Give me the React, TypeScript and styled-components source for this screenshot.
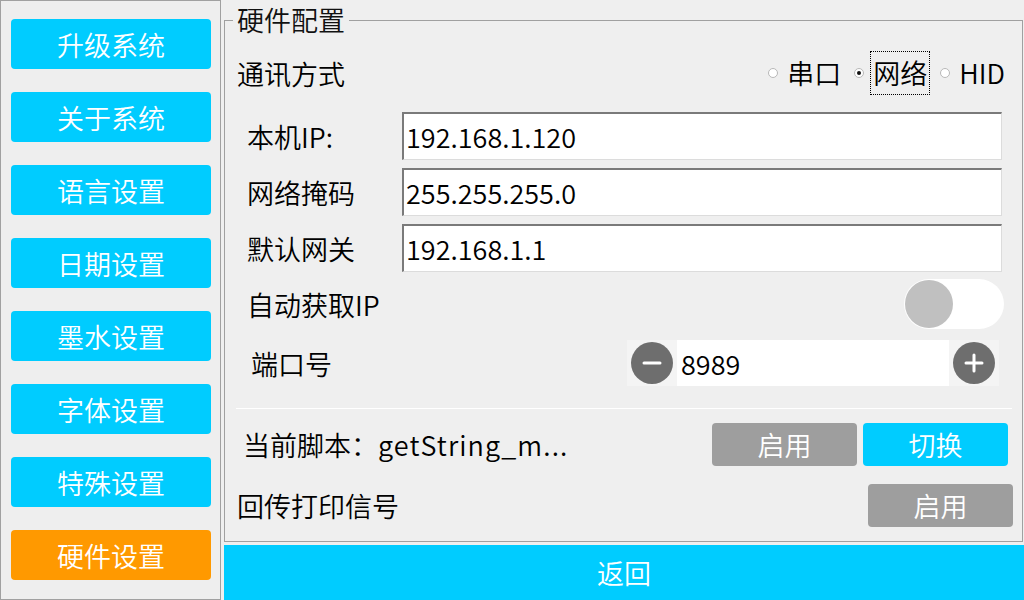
import React, { useState } from "react";
import styled, { createGlobalStyle } from "styled-components";

const GlobalStyle = createGlobalStyle`
  html, body {
    margin: 0;
    padding: 0;
    background: #efefef;
    font-family: "Noto Sans CJK SC", "Noto Sans", sans-serif;
    font-weight: 350;
  }
  * { box-sizing: border-box; }
`;

const Screen = styled.div`
  display: flex;
  width: 1024px;
  height: 600px;
  overflow: hidden;
  background: #efefef;
  color: #000;
`;

const Sidebar = styled.div`
  width: 221px;
  height: 600px;
  border: 1px solid #a0a0a0;
  background: #eeeeee;
  padding: 18px 0 0 10px;
  display: flex;
  flex-direction: column;
  gap: 23px;
`;

const NavButton = styled.div<{ $active?: boolean }>`
  width: 200px;
  height: 50px;
  border-radius: 4px;
  background: ${(p) => (p.$active ? "#ff9900" : "#00ccff")};
  color: #fff;
  font-size: 27px;
  display: flex;
  align-items: center;
  justify-content: center;
`;

const Main = styled.div`
  flex: 1;
  display: flex;
  flex-direction: column;
  padding-left: 3px;
`;

const Group = styled.fieldset`
  margin: 5px 1px 0 0;
  padding: 0 0 13px 0;
  height: 537px;
  border: 1px solid #a0a0a0;
  display: flex;
  flex-direction: column;
  min-width: 0;
`;

const Legend = styled.legend`
  margin-left: 8px;
  padding: 0 4px;
  font-size: 27px;
  line-height: 30px;
  color: #111;
`;

const Row = styled.div<{ $top: number; $h: number; $left: number; $right?: number }>`
  display: flex;
  align-items: center;
  margin-top: ${(p) => p.$top}px;
  height: ${(p) => p.$h}px;
  padding-left: ${(p) => p.$left}px;
  padding-right: ${(p) => p.$right ?? 0}px;
  font-size: 27px;
`;

const Label = styled.span`
  flex: 1;
  white-space: nowrap;
`;

const ScriptName = styled.span`
  letter-spacing: 1.1px;
`;

const FieldLabel = styled.span<{ $w: number }>`
  width: ${(p) => p.$w}px;
  white-space: nowrap;
`;

const RadioGroup = styled.div`
  display: flex;
  align-items: center;
  gap: 10px;
`;

const RadioItem = styled.div`
  display: flex;
  align-items: center;
  gap: 6px;
`;

const RadioDot = styled.span<{ $on?: boolean }>`
  width: 10px;
  height: 10px;
  border-radius: 50%;
  border: 1px solid #b8b8b8;
  background: #fff;
  display: flex;
  align-items: center;
  justify-content: center;
  &::after {
    content: "";
    width: 4px;
    height: 4px;
    border-radius: 50%;
    background: ${(p) => (p.$on ? "#111" : "transparent")};
  }
`;

const RadioText = styled.span<{ $focus?: boolean }>`
  padding: 2px 2px;
  line-height: 38px;
  border: 1px dotted ${(p) => (p.$focus ? "#000" : "transparent")};
`;

const TextInput = styled.div`
  width: 600px;
  height: 48px;
  background: #fff;
  border-top: 2px solid #7a7a7a;
  border-left: 2px solid #7a7a7a;
  border-right: 1px solid #dcdcdc;
  border-bottom: 1px solid #dcdcdc;
  padding-left: 2px;
  display: flex;
  align-items: center;
  font-size: 27px;
`;

const Toggle = styled.div`
  width: 100px;
  height: 50px;
  border-radius: 25px;
  background: #fff;
  padding: 1px;
  display: flex;
  align-items: center;
`;

const Knob = styled.div`
  width: 48px;
  height: 48px;
  border-radius: 50%;
  background: #c0c0c0;
`;

const Spin = styled.div`
  width: 372px;
  height: 46px;
  background: #f4f4f4;
  display: flex;
  align-items: center;
  padding: 0 4px;
`;

const SpinField = styled.div`
  flex: 1;
  height: 46px;
  margin: 0 4px;
  background: #fff;
  display: flex;
  align-items: center;
  padding-left: 4px;
  font-size: 27px;
`;

const SpinButton = styled.div`
  width: 42px;
  height: 42px;
  border-radius: 50%;
  background: #6e6e6e;
  display: flex;
  align-items: center;
  justify-content: center;
`;

const Separator = styled.div`
  margin: 22px 10px 0 11px;
  height: 1px;
  background: #ffffff;
`;

const ActionButton = styled.div<{ $primary?: boolean }>`
  width: 145px;
  height: 43px;
  border-radius: 4px;
  background: ${(p) => (p.$primary ? "#00ccff" : "#9e9e9e")};
  color: #fff;
  font-size: 27px;
  display: flex;
  align-items: center;
  justify-content: center;
`;

const ButtonPair = styled.div`
  display: flex;
  gap: 6px;
`;

const BackBar = styled.div`
  margin-top: 3px;
  height: 55px;
  background: #00ccff;
  color: #fff;
  font-size: 27px;
  display: flex;
  align-items: center;
  justify-content: center;
`;

const MinusIcon = () => (
  <svg width="22" height="22" viewBox="0 0 22 22">
    <path d="M3 11h16" stroke="#fff" strokeWidth="3" strokeLinecap="round" />
  </svg>
);

const PlusIcon = () => (
  <svg width="22" height="22" viewBox="0 0 22 22">
    <path d="M3 11h16M11 3v16" stroke="#fff" strokeWidth="3" strokeLinecap="round" />
  </svg>
);

const navItems = ["升级系统", "关于系统", "语言设置", "日期设置", "墨水设置", "字体设置", "特殊设置", "硬件设置"];

const fields = [
  { label: "本机IP:", value: "192.168.1.120", top: 17 },
  { label: "网络掩码", value: "255.255.255.0", top: 8 },
  { label: "默认网关", value: "192.168.1.1", top: 8 },
];

export default function App() {
  const [mode] = useState("网络");
  const modes = ["串口", "网络", "HID"];

  return (
    <>
      <GlobalStyle />
      <Screen>
        <Sidebar>
          {navItems.map((n) => (
            <NavButton key={n} $active={n === "硬件设置"}>
              {n}
            </NavButton>
          ))}
        </Sidebar>
        <Main>
          <Group>
            <Legend>硬件配置</Legend>
            <Row $top={16} $h={44} $left={12} $right={14}>
              <Label>通讯方式</Label>
              <RadioGroup>
                {modes.map((m) => (
                  <RadioItem key={m}>
                    <RadioDot $on={m === mode} />
                    <RadioText $focus={m === mode}>{m}</RadioText>
                  </RadioItem>
                ))}
              </RadioGroup>
            </Row>
            {fields.map((f) => (
              <Row key={f.label} $top={f.top} $h={48} $left={22}>
                <FieldLabel $w={155}>{f.label}</FieldLabel>
                <TextInput>{f.value}</TextInput>
              </Row>
            ))}
            <Row $top={7} $h={50} $left={22} $right={18}>
              <Label>自动获取IP</Label>
              <Toggle>
                <Knob />
              </Toggle>
            </Row>
            <Row $top={11} $h={46} $left={26} $right={23}>
              <Label>端口号</Label>
              <Spin>
                <SpinButton>
                  <MinusIcon />
                </SpinButton>
                <SpinField>8989</SpinField>
                <SpinButton>
                  <PlusIcon />
                </SpinButton>
              </Spin>
            </Row>
            <Separator />
            <Row $top={14} $h={43} $left={18} $right={14}>
              <Label>
                当前脚本：<ScriptName>getString_m...</ScriptName>
              </Label>
              <ButtonPair>
                <ActionButton>启用</ActionButton>
                <ActionButton $primary>切换</ActionButton>
              </ButtonPair>
            </Row>
            <Row $top={18} $h={43} $left={12} $right={9}>
              <Label>回传打印信号</Label>
              <ActionButton>启用</ActionButton>
            </Row>
          </Group>
          <BackBar>返回</BackBar>
        </Main>
      </Screen>
    </>
  );
}
